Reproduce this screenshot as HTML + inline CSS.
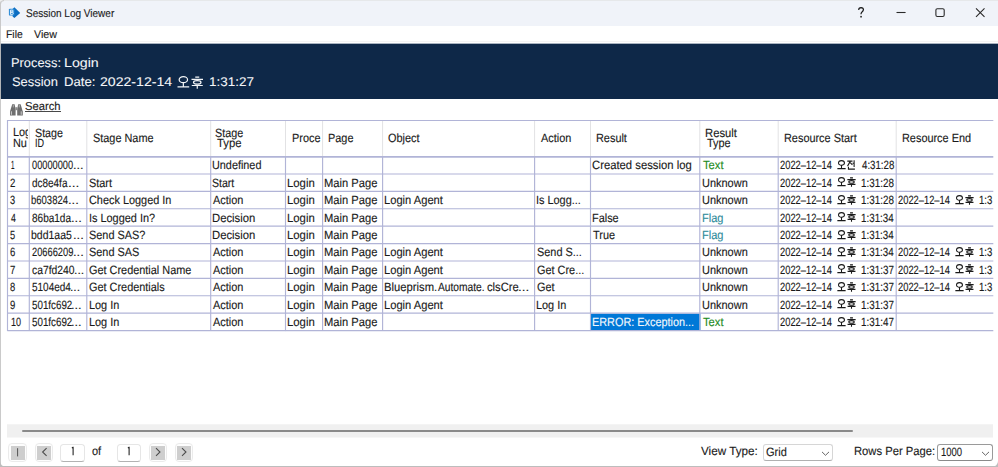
<!DOCTYPE html>
<html><head><meta charset="utf-8"><title>Session Log Viewer</title>
<style>
html,body{margin:0;padding:0;}
body{width:998px;height:467px;overflow:hidden;background:#fff;position:relative;font-family:"Liberation Sans",sans-serif;}
.t{position:absolute;white-space:pre;transform-origin:0 0;display:block;-webkit-text-stroke:0.13px currentColor;text-rendering:geometricPrecision;}
.lt{-webkit-text-stroke-width:0.08px;}
.r,.k,.clip{position:absolute;}
.clip{overflow:hidden;}
.k{overflow:visible;}
</style></head><body>
<div class="r" style="left:0px;top:0px;width:998px;height:26px;background:#f0f3f9;"></div>
<div class="r" style="left:0px;top:26px;width:998px;height:18px;background:#ffffff;"></div>
<div class="r" style="left:0px;top:41px;width:998px;height:1px;background:#f4f4f4;"></div>
<div class="r" style="left:0px;top:43px;width:998px;height:1px;background:#a9b3c0;"></div>
<div class="r" style="left:0px;top:44px;width:998px;height:55px;background:#0e2848;"></div>
<span class="t " style="left:26.15px;top:9px;font-size:11.2px;line-height:11.2px;color:#1c1c1c;transform:scaleX(0.8940);">Session Log Viewer</span>
<span class="t " style="left:5.75px;top:30px;font-size:11px;line-height:11px;color:#1c1c1c;transform:scaleX(0.9428);">File</span>
<span class="t " style="left:34.16px;top:30px;font-size:11px;line-height:11px;color:#1c1c1c;transform:scaleX(0.9734);">View</span>
<span class="t lt" style="left:11.45px;top:57px;font-size:12.6px;line-height:12.6px;color:#f4f6f8;transform:scaleX(1.0206);">Process:</span>
<span class="t lt" style="left:64.33px;top:57px;font-size:12.6px;line-height:12.6px;color:#f4f6f8;transform:scaleX(1.1279);">Login</span>
<span class="t lt" style="left:11.92px;top:76px;font-size:12.6px;line-height:12.6px;color:#f4f6f8;transform:scaleX(1.0243);">Session</span>
<span class="t lt" style="left:63.72px;top:76px;font-size:12.6px;line-height:12.6px;color:#f4f6f8;transform:scaleX(1.0453);">Date:</span>
<span class="t lt" style="left:99.80px;top:76px;font-size:12.6px;line-height:12.6px;color:#f4f6f8;transform:scaleX(1.1189);">2022-12-14</span>
<svg class="k" style="left:176.90px;top:76.00px" width="12.70" height="12.30" viewBox="0 0 10 10" preserveAspectRatio="none" fill="none" stroke="#f4f6f8" stroke-width="0.95" stroke-linecap="butt"><ellipse cx="5" cy="3" rx="3.3" ry="2.45"/><path d="M5 5.4V8.4M0.4 8.8H9.6"/></svg>
<svg class="k" style="left:191.20px;top:75.90px" width="12.50" height="12.70" viewBox="0 0 10 10" preserveAspectRatio="none" fill="none" stroke="#f4f6f8" stroke-width="0.95" stroke-linecap="butt"><path d="M3.4 0.9H6.6M0.4 2.7H9.6M0.6 7.5H9.4M5 7.5V10"/><ellipse cx="5" cy="5.05" rx="3" ry="1.35"/></svg>
<span class="t lt" style="left:208.98px;top:76px;font-size:12.6px;line-height:12.6px;color:#f4f6f8;transform:scaleX(1.0681);">1:31:27</span>
<span class="t " style="left:25.30px;top:102px;font-size:11.5px;line-height:11.5px;color:#1c1c1c;transform:scaleX(0.9750);">Search</span>
<div class="r" style="left:25.3px;top:111px;width:35.3px;height:1px;background:#484848;"></div>
<svg class="k" style="left:0;top:0" width="998" height="26" viewBox="0 0 998 26" fill="none"><path d="M12.6 8.9 14.4 7.2 20.2 13.1 14.4 18 12.6 16.4Z" fill="#0c6ec2"/><rect x="8.9" y="8.7" width="5.5" height="6.9" rx="0.9" fill="#2b8bd7"/><path d="M10.45 10.1H12.2Q13.1 10.1 13.1 11.1T12.2 12.15H10.45ZM10.45 12.15H12.4Q13.3 12.15 13.3 13.25T12.4 14.35H10.45Z" stroke="#ffffff" stroke-width="0.85" stroke-linejoin="round"/><path d="M858.6 9.9Q858.7 7.6 861.1 7.6Q863.5 7.7 863.4 9.8Q863.3 11 862 11.9Q861 12.6 861 14.2" stroke="#1a1a1a" stroke-width="1.25"/><rect x="860.3" y="15.9" width="1.5" height="1.6" fill="#1a1a1a"/><path d="M896.5 12.5H905.6" stroke="#2a2a2a" stroke-width="1.1"/><rect x="935.9" y="8.7" width="8.3" height="7.8" rx="1.4" stroke="#2a2a2a" stroke-width="1.1"/><path d="M976 8.4 984.5 16.8M984.5 8.4 976 16.8" stroke="#2a2a2a" stroke-width="1.1"/></svg>
<svg class="k" style="left:9px;top:103px" width="15" height="14" viewBox="0 0 15 14"><path d="M3.2 1.2H5.6L6.6 6 6.6 12.6H1L1 8.4Z" fill="#6e6e6e"/><path d="M9.2 1.2H11.6L13.8 8.4 13.8 12.6H8.2L8.2 6Z" fill="#6e6e6e"/><rect x="6.4" y="4.2" width="2" height="3" fill="#8a8a8a"/><path d="M2.4 8.3V11.8M12.2 8.3V11.8" stroke="#d8d8d8" stroke-width="0.9"/><path d="M4.3 2V4.4M10.3 2V4.4" stroke="#c8c8c8" stroke-width="0.7"/></svg>
<svg class="k" style="left:0;top:0" width="998" height="467" viewBox="0 0 998 467" fill="none"><rect x="591.0" y="313.65" width="109.40" height="16.60" fill="#0078d7"/><line x1="29.3" y1="121.0" x2="29.3" y2="156.4" stroke="#e2e2e4" stroke-width="1"/><line x1="86.8" y1="121.0" x2="86.8" y2="156.4" stroke="#e2e2e4" stroke-width="1"/><line x1="210.7" y1="121.0" x2="210.7" y2="156.4" stroke="#e2e2e4" stroke-width="1"/><line x1="285.5" y1="121.0" x2="285.5" y2="156.4" stroke="#e2e2e4" stroke-width="1"/><line x1="322.6" y1="121.0" x2="322.6" y2="156.4" stroke="#e2e2e4" stroke-width="1"/><line x1="382.6" y1="121.0" x2="382.6" y2="156.4" stroke="#e2e2e4" stroke-width="1"/><line x1="534.6" y1="121.0" x2="534.6" y2="156.4" stroke="#e2e2e4" stroke-width="1"/><line x1="590.5" y1="121.0" x2="590.5" y2="156.4" stroke="#e2e2e4" stroke-width="1"/><line x1="699.8" y1="121.0" x2="699.8" y2="156.4" stroke="#e2e2e4" stroke-width="1"/><line x1="778.2" y1="121.0" x2="778.2" y2="156.4" stroke="#e2e2e4" stroke-width="1"/><line x1="896.2" y1="121.0" x2="896.2" y2="156.4" stroke="#e2e2e4" stroke-width="1"/><line x1="7.5" y1="120.5" x2="993.3" y2="120.5" stroke="#b1b4d7" stroke-width="1.15"/><line x1="7.5" y1="156.9" x2="993.3" y2="156.9" stroke="#b1b4d7" stroke-width="1.7"/><line x1="7.5" y1="173.95000000000002" x2="993.3" y2="173.95000000000002" stroke="#b1b4d7" stroke-width="1.15"/><line x1="7.5" y1="191.35000000000002" x2="993.3" y2="191.35000000000002" stroke="#b1b4d7" stroke-width="1.15"/><line x1="7.5" y1="208.75" x2="993.3" y2="208.75" stroke="#b1b4d7" stroke-width="1.15"/><line x1="7.5" y1="226.15" x2="993.3" y2="226.15" stroke="#b1b4d7" stroke-width="1.15"/><line x1="7.5" y1="243.55" x2="993.3" y2="243.55" stroke="#b1b4d7" stroke-width="1.15"/><line x1="7.5" y1="260.95" x2="993.3" y2="260.95" stroke="#b1b4d7" stroke-width="1.15"/><line x1="7.5" y1="278.35" x2="993.3" y2="278.35" stroke="#b1b4d7" stroke-width="1.15"/><line x1="7.5" y1="295.75" x2="993.3" y2="295.75" stroke="#b1b4d7" stroke-width="1.15"/><line x1="7.5" y1="313.15" x2="993.3" y2="313.15" stroke="#b1b4d7" stroke-width="1.15"/><line x1="7.5" y1="330.55" x2="993.3" y2="330.55" stroke="#b1b4d7" stroke-width="1.15"/><line x1="7.5" y1="120.0" x2="7.5" y2="331.05" stroke="#b1b4d7" stroke-width="1.15"/><line x1="29.3" y1="156.9" x2="29.3" y2="331.05" stroke="#b1b4d7" stroke-width="1.15"/><line x1="86.8" y1="156.9" x2="86.8" y2="331.05" stroke="#b1b4d7" stroke-width="1.15"/><line x1="210.7" y1="156.9" x2="210.7" y2="331.05" stroke="#b1b4d7" stroke-width="1.15"/><line x1="285.5" y1="156.9" x2="285.5" y2="331.05" stroke="#b1b4d7" stroke-width="1.15"/><line x1="322.6" y1="156.9" x2="322.6" y2="331.05" stroke="#b1b4d7" stroke-width="1.15"/><line x1="382.6" y1="156.9" x2="382.6" y2="331.05" stroke="#b1b4d7" stroke-width="1.15"/><line x1="534.6" y1="156.9" x2="534.6" y2="331.05" stroke="#b1b4d7" stroke-width="1.15"/><line x1="590.5" y1="156.9" x2="590.5" y2="331.05" stroke="#b1b4d7" stroke-width="1.15"/><line x1="699.8" y1="156.9" x2="699.8" y2="331.05" stroke="#b1b4d7" stroke-width="1.15"/><line x1="778.2" y1="156.9" x2="778.2" y2="331.05" stroke="#b1b4d7" stroke-width="1.15"/><line x1="896.2" y1="156.9" x2="896.2" y2="331.05" stroke="#b1b4d7" stroke-width="1.15"/></svg>
<div class="clip" style="left:8.5px;top:122px;width:19.9px;height:34px">
<span class="t " style="left:4.61px;top:4px;font-size:12px;line-height:12px;color:#1a1a1a;transform:scaleX(0.9080);">Log</span>
<span class="t " style="left:4.61px;top:15px;font-size:12px;line-height:12px;color:#1a1a1a;transform:scaleX(0.9080);">Nu</span>
</div>
<span class="t " style="left:35.12px;top:127px;font-size:12px;line-height:12px;color:#1a1a1a;transform:scaleX(0.8914);">Stage</span>
<span class="t " style="left:34.97px;top:137px;font-size:12px;line-height:12px;color:#1a1a1a;transform:scaleX(0.7549);">ID</span>
<span class="t " style="left:92.61px;top:132px;font-size:12px;line-height:12px;color:#1a1a1a;transform:scaleX(0.9080);">Stage Name</span>
<span class="t " style="left:215.32px;top:127px;font-size:12px;line-height:12px;color:#1a1a1a;transform:scaleX(0.8980);">Stage</span>
<span class="t " style="left:216.55px;top:137px;font-size:12px;line-height:12px;color:#1a1a1a;transform:scaleX(0.9435);">Type</span>
<div class="clip" style="left:286.5px;top:122px;width:35.9px;height:34px">
<span class="t " style="left:5.11px;top:10px;font-size:12px;line-height:12px;color:#1a1a1a;transform:scaleX(0.9080);">Proce</span>
</div>
<span class="t " style="left:328.01px;top:132px;font-size:12px;line-height:12px;color:#1a1a1a;transform:scaleX(0.9080);">Page</span>
<span class="t " style="left:388.39px;top:132px;font-size:12px;line-height:12px;color:#1a1a1a;transform:scaleX(0.9080);">Object</span>
<span class="t " style="left:540.88px;top:132px;font-size:12px;line-height:12px;color:#1a1a1a;transform:scaleX(0.9080);">Action</span>
<span class="t " style="left:595.91px;top:132px;font-size:12px;line-height:12px;color:#1a1a1a;transform:scaleX(0.9080);">Result</span>
<span class="t " style="left:704.58px;top:127px;font-size:12px;line-height:12px;color:#1a1a1a;transform:scaleX(0.9377);">Result</span>
<span class="t " style="left:707.36px;top:137px;font-size:12px;line-height:12px;color:#1a1a1a;transform:scaleX(0.9079);">Type</span>
<span class="t " style="left:783.61px;top:132px;font-size:12px;line-height:12px;color:#1a1a1a;transform:scaleX(0.9080);">Resource Start</span>
<span class="t " style="left:901.61px;top:132px;font-size:12px;line-height:12px;color:#1a1a1a;transform:scaleX(0.9080);">Resource End</span>
<span class="t " style="left:11.12px;top:159px;font-size:12px;line-height:12px;color:#1a1a1a;transform:scaleX(0.5208);">1</span>
<span class="t " style="left:31.64px;top:159px;font-size:12px;line-height:12px;color:#1a1a1a;transform:scaleX(0.7681);">00000000</span>
<span class="t " style="left:73.34px;top:159px;font-size:12px;line-height:12px;color:#1a1a1a;transform:scaleX(1.0608);">...</span>
<span class="t " style="left:211.77px;top:159px;font-size:12px;line-height:12px;color:#1a1a1a;transform:scaleX(0.9035);">Undefined</span>
<span class="t " style="left:592.44px;top:159px;font-size:12px;line-height:12px;color:#1a1a1a;transform:scaleX(0.9399);">Created session log</span>
<span class="t " style="left:703.15px;top:159px;font-size:12px;line-height:12px;color:#1e8c1e;transform:scaleX(0.9326);">Text</span>
<span class="t " style="left:780.43px;top:159px;font-size:12px;line-height:12px;color:#1a1a1a;transform:scaleX(0.7783);">2022–12–14</span>
<svg class="k" style="left:836.80px;top:160.05px" width="9.00" height="9.80" viewBox="0 0 10 10" preserveAspectRatio="none" fill="none" stroke="#1a1a1a" stroke-width="1.2" stroke-linecap="butt"><ellipse cx="5" cy="3" rx="3.3" ry="2.45"/><path d="M5 5.4V8.4M0.4 8.8H9.6"/></svg>
<svg class="k" style="left:846.70px;top:160.05px" width="9.00" height="9.80" viewBox="0 0 10 10" preserveAspectRatio="none" fill="none" stroke="#1a1a1a" stroke-width="1.2" stroke-linecap="butt"><path d="M0.3 1.1H6.1M3.7 1.1 0.6 6.2M3.6 2.6 6 5M7.9 0.2V7.2M6.1 3.3H7.9M1.6 6.9V9.4H8.8"/></svg>
<span class="t " style="left:861.89px;top:159px;font-size:12px;line-height:12px;color:#1a1a1a;transform:scaleX(0.8076);">4:31:28</span>
<span class="t " style="left:10.32px;top:177px;font-size:12px;line-height:12px;color:#1a1a1a;transform:scaleX(0.8041);">2</span>
<span class="t " style="left:31.58px;top:177px;font-size:12px;line-height:12px;color:#1a1a1a;transform:scaleX(0.8293);">dc8e4fa</span>
<span class="t " style="left:67.96px;top:177px;font-size:12px;line-height:12px;color:#1a1a1a;transform:scaleX(1.1375);">...</span>
<span class="t " style="left:89.01px;top:177px;font-size:12px;line-height:12px;color:#1a1a1a;transform:scaleX(0.9080);">Start</span>
<span class="t " style="left:212.13px;top:177px;font-size:12px;line-height:12px;color:#1a1a1a;transform:scaleX(0.8778);">Start</span>
<span class="t " style="left:287.17px;top:177px;font-size:12px;line-height:12px;color:#1a1a1a;transform:scaleX(0.9452);">Login</span>
<span class="t " style="left:323.78px;top:177px;font-size:12px;line-height:12px;color:#1a1a1a;transform:scaleX(0.9309);">Main Page</span>
<span class="t " style="left:701.66px;top:177px;font-size:12px;line-height:12px;color:#1a1a1a;transform:scaleX(0.9144);">Unknown</span>
<span class="t " style="left:780.43px;top:177px;font-size:12px;line-height:12px;color:#1a1a1a;transform:scaleX(0.7783);">2022–12–14</span>
<svg class="k" style="left:836.80px;top:177.45px" width="9.00" height="9.80" viewBox="0 0 10 10" preserveAspectRatio="none" fill="none" stroke="#1a1a1a" stroke-width="1.2" stroke-linecap="butt"><ellipse cx="5" cy="3" rx="3.3" ry="2.45"/><path d="M5 5.4V8.4M0.4 8.8H9.6"/></svg>
<svg class="k" style="left:846.70px;top:177.45px" width="9.00" height="9.80" viewBox="0 0 10 10" preserveAspectRatio="none" fill="none" stroke="#1a1a1a" stroke-width="1.2" stroke-linecap="butt"><path d="M3.4 0.9H6.6M0.4 2.7H9.6M0.6 7.5H9.4M5 7.5V10"/><ellipse cx="5" cy="5.05" rx="3" ry="1.35"/></svg>
<span class="t " style="left:861.35px;top:177px;font-size:12px;line-height:12px;color:#1a1a1a;transform:scaleX(0.8212);">1:31:28</span>
<span class="t " style="left:10.45px;top:194px;font-size:12px;line-height:12px;color:#1a1a1a;transform:scaleX(0.7719);">3</span>
<span class="t " style="left:31.39px;top:194px;font-size:12px;line-height:12px;color:#1a1a1a;transform:scaleX(0.7917);">b603824</span>
<span class="t " style="left:68.41px;top:194px;font-size:12px;line-height:12px;color:#1a1a1a;transform:scaleX(1.0864);">...</span>
<span class="t " style="left:88.96px;top:194px;font-size:12px;line-height:12px;color:#1a1a1a;transform:scaleX(0.9080);">Check Logged In</span>
<span class="t " style="left:212.58px;top:194px;font-size:12px;line-height:12px;color:#1a1a1a;transform:scaleX(0.9123);">Action</span>
<span class="t " style="left:287.17px;top:194px;font-size:12px;line-height:12px;color:#1a1a1a;transform:scaleX(0.9452);">Login</span>
<span class="t " style="left:323.78px;top:194px;font-size:12px;line-height:12px;color:#1a1a1a;transform:scaleX(0.9309);">Main Page</span>
<span class="t " style="left:383.99px;top:194px;font-size:12px;line-height:12px;color:#1a1a1a;transform:scaleX(0.9290);">Login Agent</span>
<span class="t " style="left:536.30px;top:194px;font-size:12px;line-height:12px;color:#1a1a1a;transform:scaleX(0.9080);">Is Logg...</span>
<span class="t " style="left:701.66px;top:194px;font-size:12px;line-height:12px;color:#1a1a1a;transform:scaleX(0.9144);">Unknown</span>
<span class="t " style="left:780.43px;top:194px;font-size:12px;line-height:12px;color:#1a1a1a;transform:scaleX(0.7783);">2022–12–14</span>
<svg class="k" style="left:836.80px;top:194.85px" width="9.00" height="9.80" viewBox="0 0 10 10" preserveAspectRatio="none" fill="none" stroke="#1a1a1a" stroke-width="1.2" stroke-linecap="butt"><ellipse cx="5" cy="3" rx="3.3" ry="2.45"/><path d="M5 5.4V8.4M0.4 8.8H9.6"/></svg>
<svg class="k" style="left:846.70px;top:194.85px" width="9.00" height="9.80" viewBox="0 0 10 10" preserveAspectRatio="none" fill="none" stroke="#1a1a1a" stroke-width="1.2" stroke-linecap="butt"><path d="M3.4 0.9H6.6M0.4 2.7H9.6M0.6 7.5H9.4M5 7.5V10"/><ellipse cx="5" cy="5.05" rx="3" ry="1.35"/></svg>
<span class="t " style="left:861.35px;top:194px;font-size:12px;line-height:12px;color:#1a1a1a;transform:scaleX(0.8212);">1:31:28</span>
<span class="t " style="left:898.43px;top:194px;font-size:12px;line-height:12px;color:#1a1a1a;transform:scaleX(0.7783);">2022–12–14</span>
<svg class="k" style="left:954.80px;top:194.85px" width="9.00" height="9.80" viewBox="0 0 10 10" preserveAspectRatio="none" fill="none" stroke="#1a1a1a" stroke-width="1.2" stroke-linecap="butt"><ellipse cx="5" cy="3" rx="3.3" ry="2.45"/><path d="M5 5.4V8.4M0.4 8.8H9.6"/></svg>
<svg class="k" style="left:964.70px;top:194.85px" width="9.00" height="9.80" viewBox="0 0 10 10" preserveAspectRatio="none" fill="none" stroke="#1a1a1a" stroke-width="1.2" stroke-linecap="butt"><path d="M3.4 0.9H6.6M0.4 2.7H9.6M0.6 7.5H9.4M5 7.5V10"/><ellipse cx="5" cy="5.05" rx="3" ry="1.35"/></svg>
<span class="t " style="left:979.37px;top:194px;font-size:12px;line-height:12px;color:#1a1a1a;transform:scaleX(0.8000);">1:3</span>
<span class="t " style="left:10.61px;top:212px;font-size:12px;line-height:12px;color:#1a1a1a;transform:scaleX(0.7261);">4</span>
<span class="t " style="left:31.57px;top:212px;font-size:12px;line-height:12px;color:#1a1a1a;transform:scaleX(0.8353);">86ba1da</span>
<span class="t " style="left:71.41px;top:212px;font-size:12px;line-height:12px;color:#1a1a1a;transform:scaleX(1.0864);">...</span>
<span class="t " style="left:88.50px;top:212px;font-size:12px;line-height:12px;color:#1a1a1a;transform:scaleX(0.9080);">Is Logged In?</span>
<span class="t " style="left:211.88px;top:212px;font-size:12px;line-height:12px;color:#1a1a1a;transform:scaleX(0.9397);">Decision</span>
<span class="t " style="left:287.17px;top:212px;font-size:12px;line-height:12px;color:#1a1a1a;transform:scaleX(0.9452);">Login</span>
<span class="t " style="left:323.78px;top:212px;font-size:12px;line-height:12px;color:#1a1a1a;transform:scaleX(0.9309);">Main Page</span>
<span class="t " style="left:592.31px;top:212px;font-size:12px;line-height:12px;color:#1a1a1a;transform:scaleX(0.9080);">False</span>
<span class="t " style="left:702.10px;top:212px;font-size:12px;line-height:12px;color:#2f8c9c;transform:scaleX(0.9172);">Flag</span>
<span class="t " style="left:780.43px;top:212px;font-size:12px;line-height:12px;color:#1a1a1a;transform:scaleX(0.7783);">2022–12–14</span>
<svg class="k" style="left:836.80px;top:212.25px" width="9.00" height="9.80" viewBox="0 0 10 10" preserveAspectRatio="none" fill="none" stroke="#1a1a1a" stroke-width="1.2" stroke-linecap="butt"><ellipse cx="5" cy="3" rx="3.3" ry="2.45"/><path d="M5 5.4V8.4M0.4 8.8H9.6"/></svg>
<svg class="k" style="left:846.70px;top:212.25px" width="9.00" height="9.80" viewBox="0 0 10 10" preserveAspectRatio="none" fill="none" stroke="#1a1a1a" stroke-width="1.2" stroke-linecap="butt"><path d="M3.4 0.9H6.6M0.4 2.7H9.6M0.6 7.5H9.4M5 7.5V10"/><ellipse cx="5" cy="5.05" rx="3" ry="1.35"/></svg>
<span class="t " style="left:861.35px;top:212px;font-size:12px;line-height:12px;color:#1a1a1a;transform:scaleX(0.8176);">1:31:34</span>
<span class="t " style="left:10.43px;top:229px;font-size:12px;line-height:12px;color:#1a1a1a;transform:scaleX(0.7719);">5</span>
<span class="t " style="left:31.33px;top:229px;font-size:12px;line-height:12px;color:#1a1a1a;transform:scaleX(0.8734);">bdd1aa5</span>
<span class="t " style="left:72.51px;top:229px;font-size:12px;line-height:12px;color:#1a1a1a;transform:scaleX(1.0864);">...</span>
<span class="t " style="left:89.01px;top:229px;font-size:12px;line-height:12px;color:#1a1a1a;transform:scaleX(0.9080);">Send SAS?</span>
<span class="t " style="left:211.88px;top:229px;font-size:12px;line-height:12px;color:#1a1a1a;transform:scaleX(0.9397);">Decision</span>
<span class="t " style="left:287.17px;top:229px;font-size:12px;line-height:12px;color:#1a1a1a;transform:scaleX(0.9452);">Login</span>
<span class="t " style="left:323.78px;top:229px;font-size:12px;line-height:12px;color:#1a1a1a;transform:scaleX(0.9309);">Main Page</span>
<span class="t " style="left:592.96px;top:229px;font-size:12px;line-height:12px;color:#1a1a1a;transform:scaleX(0.9080);">True</span>
<span class="t " style="left:702.10px;top:229px;font-size:12px;line-height:12px;color:#2f8c9c;transform:scaleX(0.9172);">Flag</span>
<span class="t " style="left:780.43px;top:229px;font-size:12px;line-height:12px;color:#1a1a1a;transform:scaleX(0.7783);">2022–12–14</span>
<svg class="k" style="left:836.80px;top:229.65px" width="9.00" height="9.80" viewBox="0 0 10 10" preserveAspectRatio="none" fill="none" stroke="#1a1a1a" stroke-width="1.2" stroke-linecap="butt"><ellipse cx="5" cy="3" rx="3.3" ry="2.45"/><path d="M5 5.4V8.4M0.4 8.8H9.6"/></svg>
<svg class="k" style="left:846.70px;top:229.65px" width="9.00" height="9.80" viewBox="0 0 10 10" preserveAspectRatio="none" fill="none" stroke="#1a1a1a" stroke-width="1.2" stroke-linecap="butt"><path d="M3.4 0.9H6.6M0.4 2.7H9.6M0.6 7.5H9.4M5 7.5V10"/><ellipse cx="5" cy="5.05" rx="3" ry="1.35"/></svg>
<span class="t " style="left:861.35px;top:229px;font-size:12px;line-height:12px;color:#1a1a1a;transform:scaleX(0.8176);">1:31:34</span>
<span class="t " style="left:10.32px;top:246px;font-size:12px;line-height:12px;color:#1a1a1a;transform:scaleX(0.7919);">6</span>
<span class="t " style="left:31.54px;top:246px;font-size:12px;line-height:12px;color:#1a1a1a;transform:scaleX(0.7736);">20666209</span>
<span class="t " style="left:73.11px;top:246px;font-size:12px;line-height:12px;color:#1a1a1a;transform:scaleX(1.0864);">...</span>
<span class="t " style="left:89.01px;top:246px;font-size:12px;line-height:12px;color:#1a1a1a;transform:scaleX(0.9080);">Send SAS</span>
<span class="t " style="left:212.58px;top:246px;font-size:12px;line-height:12px;color:#1a1a1a;transform:scaleX(0.9123);">Action</span>
<span class="t " style="left:287.17px;top:246px;font-size:12px;line-height:12px;color:#1a1a1a;transform:scaleX(0.9452);">Login</span>
<span class="t " style="left:323.78px;top:246px;font-size:12px;line-height:12px;color:#1a1a1a;transform:scaleX(0.9309);">Main Page</span>
<span class="t " style="left:383.99px;top:246px;font-size:12px;line-height:12px;color:#1a1a1a;transform:scaleX(0.9290);">Login Agent</span>
<span class="t " style="left:536.81px;top:246px;font-size:12px;line-height:12px;color:#1a1a1a;transform:scaleX(0.9080);">Send S...</span>
<span class="t " style="left:701.66px;top:246px;font-size:12px;line-height:12px;color:#1a1a1a;transform:scaleX(0.9144);">Unknown</span>
<span class="t " style="left:780.43px;top:246px;font-size:12px;line-height:12px;color:#1a1a1a;transform:scaleX(0.7783);">2022–12–14</span>
<svg class="k" style="left:836.80px;top:247.05px" width="9.00" height="9.80" viewBox="0 0 10 10" preserveAspectRatio="none" fill="none" stroke="#1a1a1a" stroke-width="1.2" stroke-linecap="butt"><ellipse cx="5" cy="3" rx="3.3" ry="2.45"/><path d="M5 5.4V8.4M0.4 8.8H9.6"/></svg>
<svg class="k" style="left:846.70px;top:247.05px" width="9.00" height="9.80" viewBox="0 0 10 10" preserveAspectRatio="none" fill="none" stroke="#1a1a1a" stroke-width="1.2" stroke-linecap="butt"><path d="M3.4 0.9H6.6M0.4 2.7H9.6M0.6 7.5H9.4M5 7.5V10"/><ellipse cx="5" cy="5.05" rx="3" ry="1.35"/></svg>
<span class="t " style="left:861.35px;top:246px;font-size:12px;line-height:12px;color:#1a1a1a;transform:scaleX(0.8176);">1:31:34</span>
<span class="t " style="left:898.43px;top:246px;font-size:12px;line-height:12px;color:#1a1a1a;transform:scaleX(0.7783);">2022–12–14</span>
<svg class="k" style="left:954.80px;top:247.05px" width="9.00" height="9.80" viewBox="0 0 10 10" preserveAspectRatio="none" fill="none" stroke="#1a1a1a" stroke-width="1.2" stroke-linecap="butt"><ellipse cx="5" cy="3" rx="3.3" ry="2.45"/><path d="M5 5.4V8.4M0.4 8.8H9.6"/></svg>
<svg class="k" style="left:964.70px;top:247.05px" width="9.00" height="9.80" viewBox="0 0 10 10" preserveAspectRatio="none" fill="none" stroke="#1a1a1a" stroke-width="1.2" stroke-linecap="butt"><path d="M3.4 0.9H6.6M0.4 2.7H9.6M0.6 7.5H9.4M5 7.5V10"/><ellipse cx="5" cy="5.05" rx="3" ry="1.35"/></svg>
<span class="t " style="left:979.37px;top:246px;font-size:12px;line-height:12px;color:#1a1a1a;transform:scaleX(0.8000);">1:3</span>
<span class="t " style="left:10.31px;top:264px;font-size:12px;line-height:12px;color:#1a1a1a;transform:scaleX(0.8059);">7</span>
<span class="t " style="left:31.57px;top:264px;font-size:12px;line-height:12px;color:#1a1a1a;transform:scaleX(0.8612);">ca7fd240</span>
<span class="t " style="left:73.68px;top:264px;font-size:12px;line-height:12px;color:#1a1a1a;transform:scaleX(1.0225);">...</span>
<span class="t " style="left:88.96px;top:264px;font-size:12px;line-height:12px;color:#1a1a1a;transform:scaleX(0.9080);">Get Credential Name</span>
<span class="t " style="left:212.58px;top:264px;font-size:12px;line-height:12px;color:#1a1a1a;transform:scaleX(0.9123);">Action</span>
<span class="t " style="left:287.17px;top:264px;font-size:12px;line-height:12px;color:#1a1a1a;transform:scaleX(0.9452);">Login</span>
<span class="t " style="left:323.78px;top:264px;font-size:12px;line-height:12px;color:#1a1a1a;transform:scaleX(0.9309);">Main Page</span>
<span class="t " style="left:383.99px;top:264px;font-size:12px;line-height:12px;color:#1a1a1a;transform:scaleX(0.9290);">Login Agent</span>
<span class="t " style="left:536.76px;top:264px;font-size:12px;line-height:12px;color:#1a1a1a;transform:scaleX(0.9080);">Get Cre...</span>
<span class="t " style="left:701.66px;top:264px;font-size:12px;line-height:12px;color:#1a1a1a;transform:scaleX(0.9144);">Unknown</span>
<span class="t " style="left:780.43px;top:264px;font-size:12px;line-height:12px;color:#1a1a1a;transform:scaleX(0.7783);">2022–12–14</span>
<svg class="k" style="left:836.80px;top:264.45px" width="9.00" height="9.80" viewBox="0 0 10 10" preserveAspectRatio="none" fill="none" stroke="#1a1a1a" stroke-width="1.2" stroke-linecap="butt"><ellipse cx="5" cy="3" rx="3.3" ry="2.45"/><path d="M5 5.4V8.4M0.4 8.8H9.6"/></svg>
<svg class="k" style="left:846.70px;top:264.45px" width="9.00" height="9.80" viewBox="0 0 10 10" preserveAspectRatio="none" fill="none" stroke="#1a1a1a" stroke-width="1.2" stroke-linecap="butt"><path d="M3.4 0.9H6.6M0.4 2.7H9.6M0.6 7.5H9.4M5 7.5V10"/><ellipse cx="5" cy="5.05" rx="3" ry="1.35"/></svg>
<span class="t " style="left:861.35px;top:264px;font-size:12px;line-height:12px;color:#1a1a1a;transform:scaleX(0.8229);">1:31:37</span>
<span class="t " style="left:898.43px;top:264px;font-size:12px;line-height:12px;color:#1a1a1a;transform:scaleX(0.7783);">2022–12–14</span>
<svg class="k" style="left:954.80px;top:264.45px" width="9.00" height="9.80" viewBox="0 0 10 10" preserveAspectRatio="none" fill="none" stroke="#1a1a1a" stroke-width="1.2" stroke-linecap="butt"><ellipse cx="5" cy="3" rx="3.3" ry="2.45"/><path d="M5 5.4V8.4M0.4 8.8H9.6"/></svg>
<svg class="k" style="left:964.70px;top:264.45px" width="9.00" height="9.80" viewBox="0 0 10 10" preserveAspectRatio="none" fill="none" stroke="#1a1a1a" stroke-width="1.2" stroke-linecap="butt"><path d="M3.4 0.9H6.6M0.4 2.7H9.6M0.6 7.5H9.4M5 7.5V10"/><ellipse cx="5" cy="5.05" rx="3" ry="1.35"/></svg>
<span class="t " style="left:979.37px;top:264px;font-size:12px;line-height:12px;color:#1a1a1a;transform:scaleX(0.8000);">1:3</span>
<span class="t " style="left:10.40px;top:281px;font-size:12px;line-height:12px;color:#1a1a1a;transform:scaleX(0.7801);">8</span>
<span class="t " style="left:31.60px;top:281px;font-size:12px;line-height:12px;color:#1a1a1a;transform:scaleX(0.8325);">5104ed4</span>
<span class="t " style="left:70.30px;top:281px;font-size:12px;line-height:12px;color:#1a1a1a;transform:scaleX(1.0097);">...</span>
<span class="t " style="left:88.96px;top:281px;font-size:12px;line-height:12px;color:#1a1a1a;transform:scaleX(0.9080);">Get Credentials</span>
<span class="t " style="left:212.58px;top:281px;font-size:12px;line-height:12px;color:#1a1a1a;transform:scaleX(0.9123);">Action</span>
<span class="t " style="left:287.17px;top:281px;font-size:12px;line-height:12px;color:#1a1a1a;transform:scaleX(0.9452);">Login</span>
<span class="t " style="left:323.78px;top:281px;font-size:12px;line-height:12px;color:#1a1a1a;transform:scaleX(0.9309);">Main Page</span>
<span class="t " style="left:383.88px;top:281px;font-size:12px;line-height:12px;color:#1a1a1a;transform:scaleX(0.9375);">Blueprism.</span>
<span class="t " style="left:438.48px;top:281px;font-size:12px;line-height:12px;color:#1a1a1a;transform:scaleX(0.8529);">Automate.</span>
<span class="t " style="left:486.63px;top:281px;font-size:12px;line-height:12px;color:#1a1a1a;transform:scaleX(0.9344);">clsCre</span>
<span class="t " style="left:518.27px;top:281px;font-size:12px;line-height:12px;color:#1a1a1a;transform:scaleX(1.1247);">...</span>
<span class="t " style="left:536.76px;top:281px;font-size:12px;line-height:12px;color:#1a1a1a;transform:scaleX(0.9080);">Get</span>
<span class="t " style="left:701.66px;top:281px;font-size:12px;line-height:12px;color:#1a1a1a;transform:scaleX(0.9144);">Unknown</span>
<span class="t " style="left:780.43px;top:281px;font-size:12px;line-height:12px;color:#1a1a1a;transform:scaleX(0.7783);">2022–12–14</span>
<svg class="k" style="left:836.80px;top:281.85px" width="9.00" height="9.80" viewBox="0 0 10 10" preserveAspectRatio="none" fill="none" stroke="#1a1a1a" stroke-width="1.2" stroke-linecap="butt"><ellipse cx="5" cy="3" rx="3.3" ry="2.45"/><path d="M5 5.4V8.4M0.4 8.8H9.6"/></svg>
<svg class="k" style="left:846.70px;top:281.85px" width="9.00" height="9.80" viewBox="0 0 10 10" preserveAspectRatio="none" fill="none" stroke="#1a1a1a" stroke-width="1.2" stroke-linecap="butt"><path d="M3.4 0.9H6.6M0.4 2.7H9.6M0.6 7.5H9.4M5 7.5V10"/><ellipse cx="5" cy="5.05" rx="3" ry="1.35"/></svg>
<span class="t " style="left:861.35px;top:281px;font-size:12px;line-height:12px;color:#1a1a1a;transform:scaleX(0.8229);">1:31:37</span>
<span class="t " style="left:898.43px;top:281px;font-size:12px;line-height:12px;color:#1a1a1a;transform:scaleX(0.7783);">2022–12–14</span>
<svg class="k" style="left:954.80px;top:281.85px" width="9.00" height="9.80" viewBox="0 0 10 10" preserveAspectRatio="none" fill="none" stroke="#1a1a1a" stroke-width="1.2" stroke-linecap="butt"><ellipse cx="5" cy="3" rx="3.3" ry="2.45"/><path d="M5 5.4V8.4M0.4 8.8H9.6"/></svg>
<svg class="k" style="left:964.70px;top:281.85px" width="9.00" height="9.80" viewBox="0 0 10 10" preserveAspectRatio="none" fill="none" stroke="#1a1a1a" stroke-width="1.2" stroke-linecap="butt"><path d="M3.4 0.9H6.6M0.4 2.7H9.6M0.6 7.5H9.4M5 7.5V10"/><ellipse cx="5" cy="5.05" rx="3" ry="1.35"/></svg>
<span class="t " style="left:979.37px;top:281px;font-size:12px;line-height:12px;color:#1a1a1a;transform:scaleX(0.8000);">1:3</span>
<span class="t " style="left:10.36px;top:299px;font-size:12px;line-height:12px;color:#1a1a1a;transform:scaleX(0.7919);">9</span>
<span class="t " style="left:31.61px;top:299px;font-size:12px;line-height:12px;color:#1a1a1a;transform:scaleX(0.8157);">501fc692</span>
<span class="t " style="left:71.44px;top:299px;font-size:12px;line-height:12px;color:#1a1a1a;transform:scaleX(1.0608);">...</span>
<span class="t " style="left:88.61px;top:299px;font-size:12px;line-height:12px;color:#1a1a1a;transform:scaleX(0.9080);">Log In</span>
<span class="t " style="left:212.58px;top:299px;font-size:12px;line-height:12px;color:#1a1a1a;transform:scaleX(0.9123);">Action</span>
<span class="t " style="left:287.17px;top:299px;font-size:12px;line-height:12px;color:#1a1a1a;transform:scaleX(0.9452);">Login</span>
<span class="t " style="left:323.78px;top:299px;font-size:12px;line-height:12px;color:#1a1a1a;transform:scaleX(0.9309);">Main Page</span>
<span class="t " style="left:383.99px;top:299px;font-size:12px;line-height:12px;color:#1a1a1a;transform:scaleX(0.9290);">Login Agent</span>
<span class="t " style="left:536.41px;top:299px;font-size:12px;line-height:12px;color:#1a1a1a;transform:scaleX(0.9080);">Log In</span>
<span class="t " style="left:701.66px;top:299px;font-size:12px;line-height:12px;color:#1a1a1a;transform:scaleX(0.9144);">Unknown</span>
<span class="t " style="left:780.43px;top:299px;font-size:12px;line-height:12px;color:#1a1a1a;transform:scaleX(0.7783);">2022–12–14</span>
<svg class="k" style="left:836.80px;top:299.25px" width="9.00" height="9.80" viewBox="0 0 10 10" preserveAspectRatio="none" fill="none" stroke="#1a1a1a" stroke-width="1.2" stroke-linecap="butt"><ellipse cx="5" cy="3" rx="3.3" ry="2.45"/><path d="M5 5.4V8.4M0.4 8.8H9.6"/></svg>
<svg class="k" style="left:846.70px;top:299.25px" width="9.00" height="9.80" viewBox="0 0 10 10" preserveAspectRatio="none" fill="none" stroke="#1a1a1a" stroke-width="1.2" stroke-linecap="butt"><path d="M3.4 0.9H6.6M0.4 2.7H9.6M0.6 7.5H9.4M5 7.5V10"/><ellipse cx="5" cy="5.05" rx="3" ry="1.35"/></svg>
<span class="t " style="left:861.35px;top:299px;font-size:12px;line-height:12px;color:#1a1a1a;transform:scaleX(0.8229);">1:31:37</span>
<span class="t " style="left:10.81px;top:316px;font-size:12px;line-height:12px;color:#1a1a1a;transform:scaleX(0.7515);">10</span>
<span class="t " style="left:31.61px;top:316px;font-size:12px;line-height:12px;color:#1a1a1a;transform:scaleX(0.8157);">501fc692</span>
<span class="t " style="left:71.44px;top:316px;font-size:12px;line-height:12px;color:#1a1a1a;transform:scaleX(1.0608);">...</span>
<span class="t " style="left:88.61px;top:316px;font-size:12px;line-height:12px;color:#1a1a1a;transform:scaleX(0.9080);">Log In</span>
<span class="t " style="left:212.58px;top:316px;font-size:12px;line-height:12px;color:#1a1a1a;transform:scaleX(0.9123);">Action</span>
<span class="t " style="left:287.17px;top:316px;font-size:12px;line-height:12px;color:#1a1a1a;transform:scaleX(0.9452);">Login</span>
<span class="t " style="left:323.78px;top:316px;font-size:12px;line-height:12px;color:#1a1a1a;transform:scaleX(0.9309);">Main Page</span>
<span class="t " style="left:592.31px;top:316px;font-size:12px;line-height:12px;color:#f2f7fc;transform:scaleX(0.9057);">ERROR: Exception...</span>
<span class="t " style="left:703.15px;top:316px;font-size:12px;line-height:12px;color:#1e8c1e;transform:scaleX(0.9326);">Text</span>
<span class="t " style="left:780.43px;top:316px;font-size:12px;line-height:12px;color:#1a1a1a;transform:scaleX(0.7783);">2022–12–14</span>
<svg class="k" style="left:836.80px;top:316.65px" width="9.00" height="9.80" viewBox="0 0 10 10" preserveAspectRatio="none" fill="none" stroke="#1a1a1a" stroke-width="1.2" stroke-linecap="butt"><ellipse cx="5" cy="3" rx="3.3" ry="2.45"/><path d="M5 5.4V8.4M0.4 8.8H9.6"/></svg>
<svg class="k" style="left:846.70px;top:316.65px" width="9.00" height="9.80" viewBox="0 0 10 10" preserveAspectRatio="none" fill="none" stroke="#1a1a1a" stroke-width="1.2" stroke-linecap="butt"><path d="M3.4 0.9H6.6M0.4 2.7H9.6M0.6 7.5H9.4M5 7.5V10"/><ellipse cx="5" cy="5.05" rx="3" ry="1.35"/></svg>
<span class="t " style="left:861.35px;top:316px;font-size:12px;line-height:12px;color:#1a1a1a;transform:scaleX(0.8229);">1:31:47</span>
<div class="r" style="left:7px;top:424px;width:986px;height:1px;background:#f4f4f4;"></div>
<div class="r" style="left:7px;top:425px;width:986px;height:12px;background:#f0f0f0;"></div>
<div class="r" style="left:7px;top:437px;width:986px;height:1px;background:#f7f7f7;"></div>
<div class="r" style="left:22.3px;top:430px;width:831px;height:2px;background:#8a8a8a;border-radius:1px;"></div>
<div class="r" style="left:8.4px;top:443.4px;width:18.7px;height:18.5px;border:1px solid #ebebeb;border-radius:4px;box-sizing:border-box;background:#fdfdfd"></div>
<div class="r" style="left:11.1px;top:446.1px;width:13.6px;height:13.6px;background:#cecece;"></div>
<svg class="k" style="left:13.899999999999999px;top:447px" width="8" height="12" viewBox="0 0 8 12" fill="none" stroke="#444" stroke-width="0.9"><path d="M3.6 1.2V9.4"/></svg>
<div class="r" style="left:34.5px;top:443.4px;width:18.8px;height:18.5px;border:1px solid #ebebeb;border-radius:4px;box-sizing:border-box;background:#fdfdfd"></div>
<div class="r" style="left:37.0px;top:446.1px;width:14.0px;height:13.6px;background:#cecece;"></div>
<svg class="k" style="left:40.0px;top:447px" width="8" height="12" viewBox="0 0 8 12" fill="none" stroke="#4a4a4a" stroke-width="1.05"><path d="M6.6 1.2 2.6 5 6.6 8.8"/></svg>
<div class="r" style="left:148.5px;top:443.4px;width:18.7px;height:18.5px;border:1px solid #ebebeb;border-radius:4px;box-sizing:border-box;background:#fdfdfd"></div>
<div class="r" style="left:151.0px;top:446.1px;width:13.6px;height:13.6px;background:#cecece;"></div>
<svg class="k" style="left:153.8px;top:447px" width="8" height="12" viewBox="0 0 8 12" fill="none" stroke="#4a4a4a" stroke-width="1.05"><path d="M2.0 1.2 6.0 5 2.0 8.8"/></svg>
<div class="r" style="left:174.6px;top:443.4px;width:18.2px;height:18.5px;border:1px solid #ebebeb;border-radius:4px;box-sizing:border-box;background:#fdfdfd"></div>
<div class="r" style="left:177.0px;top:446.1px;width:13.8px;height:13.6px;background:#cecece;"></div>
<svg class="k" style="left:179.9px;top:447px" width="8" height="12" viewBox="0 0 8 12" fill="none" stroke="#4a4a4a" stroke-width="1.05"><path d="M2.0 1.2 6.0 5 2.0 8.8"/></svg>
<div class="r" style="left:60.1px;top:444.3px;width:25.1px;height:18.2px;border:1px solid #e6e6e6;border-bottom:1.7px solid #b2b2b2;border-radius:3.5px;box-sizing:border-box;background:#fff"></div>
<div class="r" style="left:116.5px;top:444.3px;width:24.9px;height:18.2px;border:1px solid #e6e6e6;border-bottom:1.7px solid #b2b2b2;border-radius:3.5px;box-sizing:border-box;background:#fff"></div>
<svg class="k" style="left:69.9px;top:445px" width="6" height="12" viewBox="0 0 6 12" fill="none" stroke="#1a1a1a" stroke-width="1.05"><path d="M3.1 1.7V10.2M3.1 2 1.9 3.2"/></svg>
<svg class="k" style="left:126.19999999999999px;top:445px" width="6" height="12" viewBox="0 0 6 12" fill="none" stroke="#1a1a1a" stroke-width="1.05"><path d="M3.1 1.7V10.2M3.1 2 1.9 3.2"/></svg>
<span class="t " style="left:92.34px;top:445px;font-size:12px;line-height:12px;color:#1a1a1a;transform:scaleX(0.9131);">of</span>
<span class="t " style="left:700.85px;top:445px;font-size:12px;line-height:12px;color:#1a1a1a;transform:scaleX(0.9734);">View Type:</span>
<span class="t " style="left:853.88px;top:445px;font-size:12px;line-height:12px;color:#1a1a1a;transform:scaleX(0.9346);">Rows Per Page:</span>
<div class="r" style="left:763.0px;top:444.2px;width:69.7px;height:17px;border:1px solid #d6d6d6;border-bottom-color:#b0b0b0;border-radius:3px;box-sizing:border-box;background:#fff"></div>
<svg class="k" style="left:820.5px;top:450px" width="9" height="7" viewBox="0 0 9 7" fill="none" stroke="#555" stroke-width="0.9"><path d="M1 1.9 4.5 5.3 8 1.9"/></svg>
<div class="r" style="left:937.4px;top:444.2px;width:55.8px;height:17px;border:1px solid #9a9a9a;border-bottom-color:#8a8a8a;border-radius:3px;box-sizing:border-box;background:#fff"></div>
<svg class="k" style="left:981.0px;top:450px" width="9" height="7" viewBox="0 0 9 7" fill="none" stroke="#555" stroke-width="0.9"><path d="M1 1.9 4.5 5.3 8 1.9"/></svg>
<span class="t " style="left:766.05px;top:446px;font-size:12px;line-height:12px;color:#1a1a1a;transform:scaleX(0.9202);">Grid</span>
<span class="t " style="left:940.68px;top:446px;font-size:12px;line-height:12px;color:#1a1a1a;transform:scaleX(0.7899);">1000</span>
<!-- window frame -->
<div class="r" style="left:0;top:0;width:1px;height:467px;background:#c4c4c4;opacity:.9"></div>
<div class="r" style="left:0;top:466px;width:998px;height:1px;background:#bdbdbd"></div>
<div class="r" style="left:0;top:0;width:998px;height:1px;background:#e6e8ea"></div>
<svg class="k" style="left:0;top:0" width="8" height="8" viewBox="0 0 8 8"><path d="M0 0H4A4 4 0 0 0 0 4Z" fill="#efefef"/><path d="M0.5 4A3.5 3.5 0 0 1 4 0.5" fill="none" stroke="#c6c6c6"/></svg>
<svg class="k" style="left:0;top:459px" width="8" height="8" viewBox="0 0 8 8"><path d="M0 8H6A6 6 0 0 1 0 2Z" fill="#bdbdbd"/></svg>
<svg class="k" style="left:990px;top:459px" width="8" height="8" viewBox="0 0 8 8"><path d="M8 8H2A6 6 0 0 0 8 2Z" fill="#bdbdbd"/></svg>
</body></html>
